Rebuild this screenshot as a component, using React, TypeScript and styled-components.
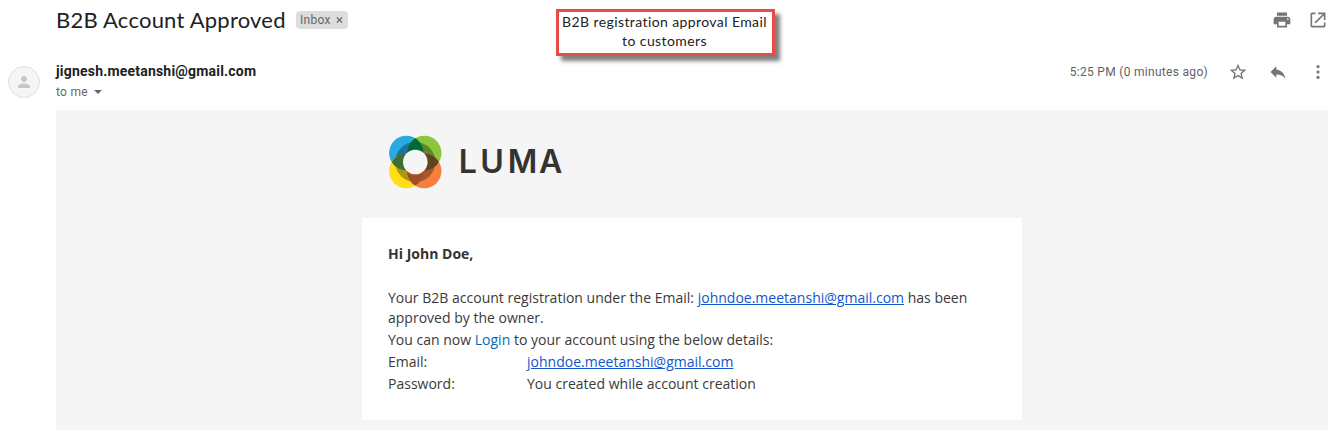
import React from "react";
import styled, { createGlobalStyle } from "styled-components";

const GlobalStyle = createGlobalStyle`
  * { box-sizing: border-box; }
  body { margin: 0; background: #fff; overflow: hidden; }
`;

const Page = styled.main`
  position: relative;
  display: flex;
  flex-direction: column;
  width: 1333px;
  height: 430px;
  font-family: Roboto, "Liberation Sans", sans-serif;
  color: #202124;
`;

const SubjectBar = styled.header`
  display: flex;
  align-items: center;
  height: 40px;
  padding: 0 5px 0 56px;
`;

const Subject = styled.h1`
  margin: 0;
  width: 240px;
  font: 400 22px/28px Lato, sans-serif;
  letter-spacing: 0.23px;
  white-space: nowrap;
`;

const Label = styled.span`
  display: flex;
  align-items: center;
  gap: 5px;
  height: 18px;
  padding: 0 5px 0 4px;
  border-radius: 4px;
  background: #ddd;
  color: #666;
  font-size: 12px;
  letter-spacing: 0.3px;
`;

const Actions = styled.div<{ $gap: number; $height?: number }>`
  display: flex;
  align-items: center;
  gap: ${(p) => p.$gap}px;
  height: ${(p) => (p.$height ? `${p.$height}px` : "auto")};
  margin-left: auto;
`;

const Icon = styled.svg`
  display: block;
  width: 20px;
  height: 20px;
  flex: none;
  fill: #757575;
`;

const SenderBar = styled.section`
  display: flex;
  height: 70px;
  padding: 21px 5px 0 8px;
`;

const Avatar = styled.div`
  display: grid;
  place-items: center;
  width: 32px;
  height: 32px;
  margin: 5px 16px 0 0;
  border: 1px solid #e0e0e0;
  border-radius: 50%;
  background: #f5f5f5;
`;

const Sender = styled.div`
  display: flex;
  flex-direction: column;
`;

const SenderName = styled.strong`
  font-size: 14px;
  font-weight: 700;
  line-height: 20px;
  letter-spacing: 0.2px;
`;

const Recipient = styled.span`
  display: flex;
  align-items: center;
  gap: 6px;
  padding-top: 1px;
  color: #666;
  font-size: 12px;
  line-height: 20px;
  letter-spacing: 0.3px;
`;

const Caret = styled.span`
  border: 4px solid transparent;
  border-top-color: #666;
  border-bottom: 0;
`;

const Time = styled.time`
  color: #5f6368;
  font-size: 12px;
  letter-spacing: 0.3px;
`;

const Mail = styled.section`
  flex: 1;
  margin: 0 5px 0 56px;
  padding-left: 306px;
  background: #f5f5f5;
`;

const Brand = styled.div`
  display: flex;
  align-items: center;
  height: 108px;
  padding: 0 0 4px 27px;
`;

const Card = styled.article`
  width: 660px;
  height: 202px;
  padding: 26px 26px 0;
  background: #fff;
  color: #3a3a3a;
  font: 400 14px/20px "Open Sans", sans-serif;
  letter-spacing: 0.007px;
`;

const Greeting = styled.p`
  margin: 0 0 24px;
  color: #333;
  font-weight: 700;
`;

const Paragraph = styled.p`
  margin: 0 0 2px;
`;

const Detail = styled.div`
  display: grid;
  grid-template-columns: 139px 1fr;
  margin-bottom: 2px;
`;

const Link = styled.a<{ $plain?: boolean }>`
  color: ${(p) => (p.$plain ? "#006bb4" : "#1155cc")};
  text-decoration: ${(p) => (p.$plain ? "none" : "underline")};
`;

const Callout = styled.aside`
  position: absolute;
  left: 556px;
  top: 9px;
  width: 219px;
  height: 47px;
  border: 3px solid #e94b47;
  background: #fff;
  box-shadow: 5px 5px 4px rgba(0, 0, 0, 0.5);
  color: #222;
  font: 400 14px/19px Lato, sans-serif;
  letter-spacing: 0.4px;
  text-align: center;
  white-space: nowrap;
`;

const CalloutLine = styled.span`
  display: block;
  margin: 0 1px 0 -1px;
`;

const LumaLogo = () => (
  <svg width="180" height="54" viewBox="0 0 180 54">
    <defs>
      <clipPath id="blue"><circle cx="17.3" cy="18" r="17.2" /></clipPath>
      <clipPath id="orange"><circle cx="35.3" cy="36" r="17.2" /></clipPath>
    </defs>
    <circle cx="17.3" cy="18" r="17.2" fill="#29abe2" />
    <circle cx="35.3" cy="18" r="17.2" fill="#8cc63f" />
    <circle cx="17.3" cy="36" r="17.2" fill="#ffde17" />
    <circle cx="35.3" cy="36" r="17.2" fill="#f77f3e" />
    <circle cx="26.3" cy="27" r="20" fill="#000" opacity="0.32" />
    <circle cx="35.3" cy="18" r="17.2" fill="#00693a" clipPath="url(#blue)" />
    <circle cx="17.3" cy="36" r="17.2" fill="#3c6e37" clipPath="url(#blue)" />
    <circle cx="35.3" cy="18" r="17.2" fill="#5f4420" clipPath="url(#orange)" />
    <circle cx="17.3" cy="36" r="17.2" fill="#a34d25" clipPath="url(#orange)" />
    <circle cx="26.3" cy="27" r="12.3" fill="#f5f5f5" />
    <text x="69.8 91.3 118.8 150" y="38" fontFamily="Inter" fontWeight="600" fontSize="32" fill="#333">LUMA</text>
  </svg>
);

export default function App() {
  return (
    <Page>
      <GlobalStyle />
      <SubjectBar>
        <Subject>B2B Account Approved</Subject>
        <Label>
          Inbox
          <svg width="7" height="8" viewBox="0 0 8 8" stroke="#666" strokeWidth="1.6"><path d="M1 1l6 6M7 1L1 7" /></svg>
        </Label>
        <Actions $gap={16}>
          <Icon viewBox="0 0 24 24"><path d="M19 8H5c-1.66 0-3 1.34-3 3v6h4v4h12v-4h4v-6c0-1.66-1.34-3-3-3zm-3 11H8v-5h8v5zm3-7c-.55 0-1-.45-1-1s.45-1 1-1 1 .45 1 1-.45 1-1 1zm-1-9H6v4h12V3z" /></Icon>
          <Icon viewBox="0 0 24 24"><path d="M19 19H5V5h4V3H5c-1.11 0-2 .9-2 2v14c0 1.1.89 2 2 2h14c1.1 0 2-.9 2-2v-4h-2v4zM12 3v2h5.59l-9.83 9.83 1.41 1.41L19 6.41V12h2V3h-9z" /></Icon>
        </Actions>
      </SubjectBar>
      <SenderBar>
        <Avatar>
          <svg width="18" height="18" viewBox="0 0 24 24" fill="#c6c6c6"><path d="M12 12c2.21 0 4-1.79 4-4s-1.79-4-4-4-4 1.79-4 4 1.79 4 4 4zm0 2c-2.67 0-8 1.34-8 4v2h16v-2c0-2.66-5.33-4-8-4z" /></svg>
        </Avatar>
        <Sender>
          <SenderName>jignesh.meetanshi@gmail.com</SenderName>
          <Recipient>to me <Caret /></Recipient>
        </Sender>
        <Actions $gap={20} $height={22}>
          <Time>5:25 PM (0 minutes ago)</Time>
          <Icon viewBox="0 0 24 24"><path d="M22 9.24l-7.19-.62L12 2 9.19 8.63 2 9.24l5.46 4.73L5.82 21 12 17.27 18.18 21l-1.63-7.03L22 9.24zM12 15.4l-3.76 2.27 1-4.28-3.32-2.88 4.38-.38L12 6.1l1.71 4.04 4.38.38-3.32 2.88 1 4.28L12 15.4z" /></Icon>
          <Icon viewBox="0 0 24 24"><path d="M10 9V5l-7 7 7 7v-4.1c5 0 8.5 1.6 11 5.1-1-5-4-10-11-11z" /></Icon>
          <Icon viewBox="0 0 24 24"><circle cx="12" cy="5.500" r="1.9" /><circle cx="12" cy="12" r="1.9" /><circle cx="12" cy="18.5" r="1.9" /></Icon>
        </Actions>
      </SenderBar>
      <Mail>
        <Brand><LumaLogo /></Brand>
        <Card>
          <Greeting>Hi John Doe,</Greeting>
          <Paragraph>
            Your B2B account registration under the Email: <Link>johndoe.meetanshi@gmail.com</Link> has been approved by the owner.
          </Paragraph>
          <Paragraph>You can now <Link $plain>Login</Link> to your account using the below details:</Paragraph>
          <Detail><span>Email:</span><span><Link>johndoe.meetanshi@gmail.com</Link></span></Detail>
          <Detail><span>Password:</span><span>You created while account creation</span></Detail>
        </Card>
      </Mail>
      <Callout>
        <CalloutLine>B2B registration approval Email</CalloutLine>
        <CalloutLine>to customers</CalloutLine>
      </Callout>
    </Page>
  );
}
